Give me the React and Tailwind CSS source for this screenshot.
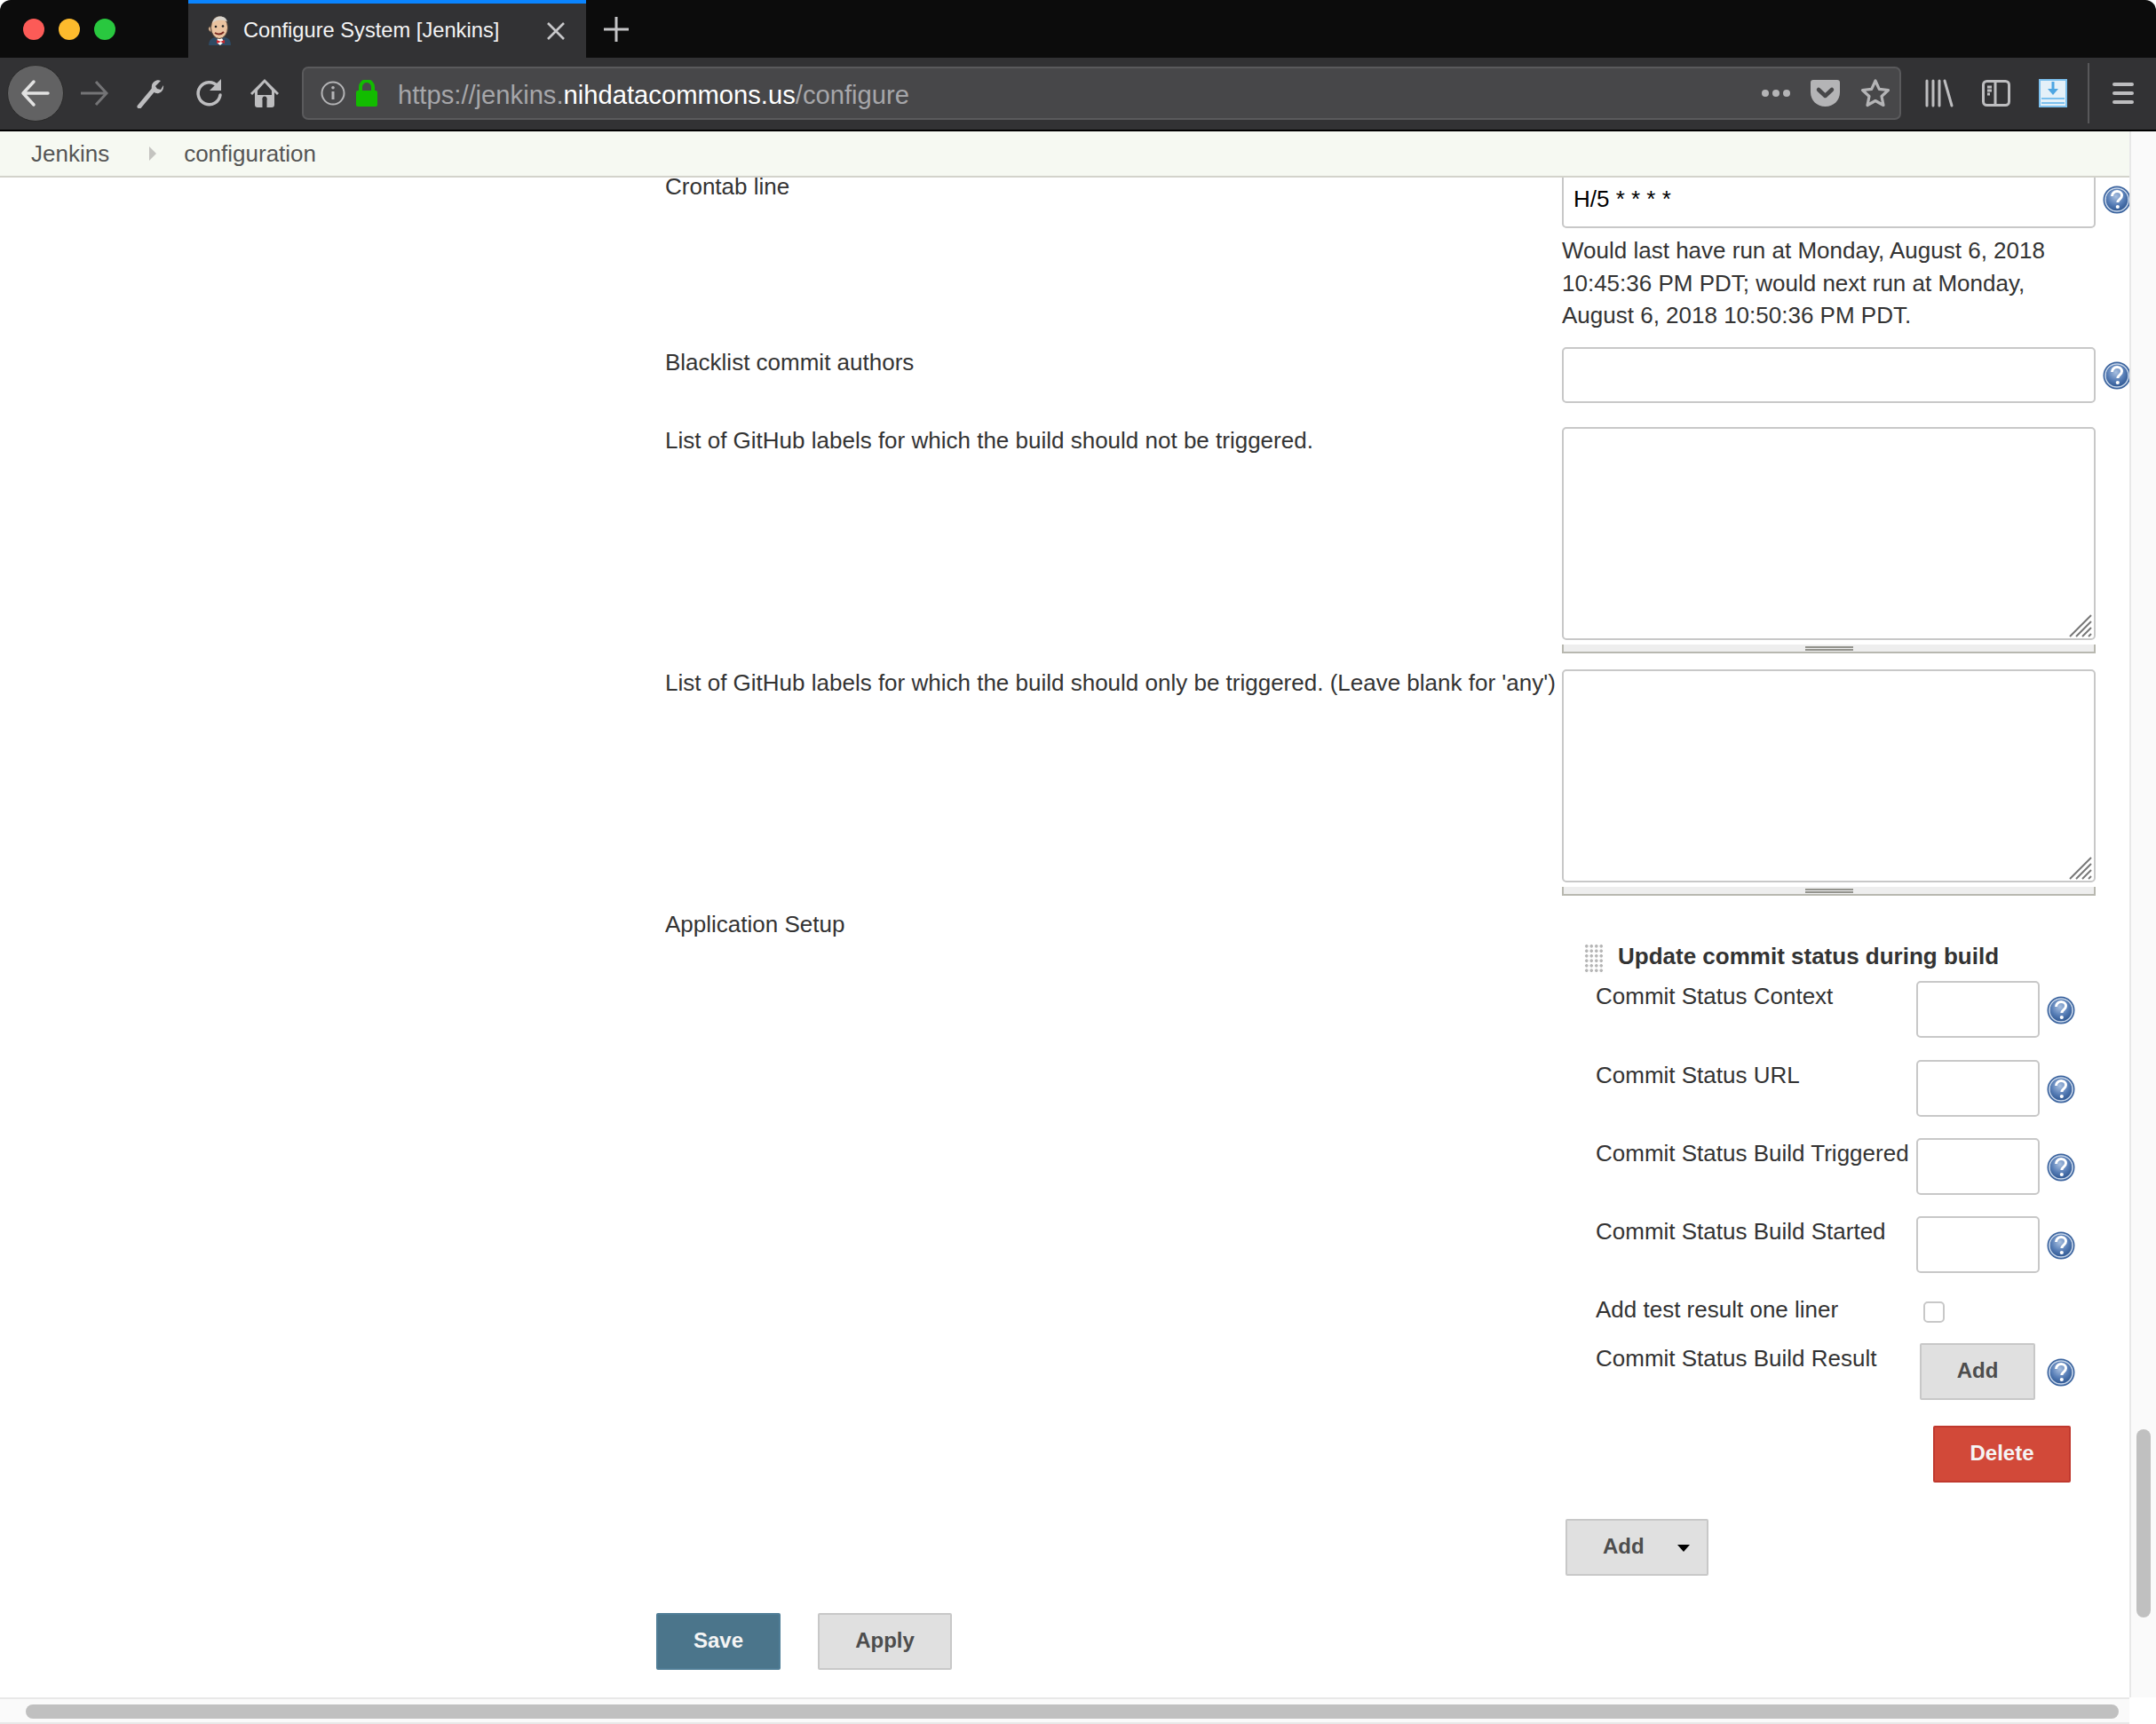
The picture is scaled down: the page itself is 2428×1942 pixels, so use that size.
import React from 'react'

const font = { fontFamily: '"Liberation Sans", Arial, sans-serif' }

function HelpIcon({ className = '' }) {
  return (
    <svg width="32" height="32" viewBox="0 0 32 32" className={`shrink-0 ${className}`}>
      <defs>
        <radialGradient id="helpfill" cx="45%" cy="35%" r="70%">
          <stop offset="0%" stopColor="#a9c0e0" />
          <stop offset="55%" stopColor="#5a80b8" />
          <stop offset="100%" stopColor="#2c5590" />
        </radialGradient>
      </defs>
      <circle cx="16" cy="16" r="15.5" fill="#3d659f" />
      <circle cx="16" cy="16" r="13" fill="none" stroke="#c7d6ea" strokeWidth="1.6" />
      <circle cx="16" cy="16" r="12" fill="url(#helpfill)" />
      <path d="M10.500 12c0-3.400 2.500-5.400 5.700-5.400 3.100 0 5.300 2 5.300 4.700 0 4-4.600 4-4.600 7.700" fill="none" stroke="#fff" strokeWidth="3" />
      <circle cx="16.800" cy="24" r="2.100" fill="#fff" />
    </svg>
  )
}

function Row({ label, top = 'pt-[2px]', children, help = true, helpGap = 'ml-[9px]' }) {
  return (
    <div className="flex">
      <div className={`w-[1010px] shrink-0 text-[26px] leading-[30px] text-[#333] ${top}`}>{label}</div>
      <div className="w-[601px] shrink-0">{children}</div>
      {help && <HelpIcon className={`${helpGap} mt-[16px]`} />}
    </div>
  )
}

function Grip() {
  return (
    <div className="mt-[5px] flex h-[10px] w-[601px] justify-center border-x-2 border-b-2 border-[#b8b8b0] bg-[#eeeeee]">
      <div className="mt-[2px] h-[5px] w-[54px] border-y-2 border-[#94948e]" />
    </div>
  )
}

function TextArea() {
  return (
    <div className="relative h-[240px] w-[601px]">
      <textarea readOnly className="block h-full w-full resize-none rounded-[5px] border-2 border-[#c8c8c8] bg-white outline-none" />
      <svg width="26" height="26" viewBox="0 0 26 26" className="absolute bottom-[3px] right-[4px]">
        <path d="M1 25L25 1M8 25L25 8M15 25L25 15M22 25L25 22" stroke="#777" strokeWidth="2" fill="none" />
      </svg>
    </div>
  )
}

function SmallInput() {
  return <input readOnly className="block h-[64px] w-[139px] rounded-[5px] border-2 border-[#c8c8c8] bg-white outline-none" />
}

function SubRow({ label, children, help = true, className = '' }) {
  return (
    <div className={`flex pl-[38px] ${className}`}>
      <div className="w-[361px] shrink-0 pt-[2px] text-[26px] leading-[30px] text-[#333]">{label}</div>
      {children}
      {help && <HelpIcon className="ml-[8px] mt-[17px]" />}
    </div>
  )
}

function GrayButton({ children, className = '' }) {
  return (
    <button className={`h-[64px] rounded-[2px] border-2 border-[#c8c8c8] bg-[#e0e0e0] text-[24px] font-bold text-[#4d4d4d] ${className}`}>
      {children}
    </button>
  )
}

function Favicon() {
  return (
    <svg width="28" height="33" viewBox="0 0 28 33" className="shrink-0">
      <path d="M2 33c0-6 4-9 8-9h9c5 0 8 3 8 9z" fill="#2f4a63" />
      <path d="M12 25l5 0 2 4-4 4-4-3z" fill="#fff" />
      <path d="M11 27l5 2-5 2zM20 27l-5 2 5 2z" fill="#c8252c" />
      <ellipse cx="14" cy="13" rx="9.500" ry="12.500" fill="#eac3a0" stroke="#5b4a3e" strokeWidth="1" />
      <path d="M6 8C7 3 11 .5 15 .5s7 2 8 6c-4-3-12-3-17 1.500z" fill="#d9d4cc" />
      <circle cx="10" cy="12" r="1.300" fill="#222" />
      <circle cx="18" cy="11.500" r="1.300" fill="#222" />
      <path d="M9 19c3 2 7 2 10-1" fill="none" stroke="#7a2a20" strokeWidth="2" />
      <path d="M4 12c-3 0-3 5 1 6z" fill="#eac3a0" stroke="#5b4a3e" strokeWidth=".8" />
    </svg>
  )
}

function TitleBar() {
  return (
    <div className="flex h-[65px] shrink-0 items-stretch bg-[#0c0c0c]">
      <div className="flex w-[212px] shrink-0 items-center gap-[16px] pl-[26px]">
        <div className="h-[24px] w-[24px] rounded-full bg-[#fc5b57]" />
        <div className="h-[24px] w-[24px] rounded-full bg-[#fdbb2d]" />
        <div className="h-[24px] w-[24px] rounded-full bg-[#29c83f]" />
      </div>
      <div className="flex w-[448px] items-center border-t-[4px] border-[#0a84ff] bg-[#323234] pl-[21px]">
        <Favicon />
        <span className="ml-[13px] w-[341px] pt-[1px] text-[23.700px] text-[#f4f4f4]">Configure System [Jenkins]</span>
        <svg width="22" height="22" viewBox="0 0 22 22">
          <path d="M2 2l18 18M20 2L2 20" stroke="#c8c8ca" strokeWidth="2.600" />
        </svg>
      </div>
      <svg width="28" height="28" viewBox="0 0 28 28" className="ml-[20px] mt-[19px]">
        <path d="M14 0v28M0 14h28" stroke="#c4c4c6" strokeWidth="3" />
      </svg>
    </div>
  )
}

function ToolIcon({ w = 32, children, className = '' }) {
  return (
    <svg width={w} height="34" viewBox={`0 0 ${w} 34`} className={`shrink-0 ${className}`} fill="none" stroke="#bdbdbf" strokeWidth="3">
      {children}
    </svg>
  )
}

function Toolbar() {
  return (
    <div className="flex h-[83px] shrink-0 items-center border-b-2 border-black bg-[#323234] pb-[2px]">
      <div className="ml-[8px] flex h-[64px] w-[64px] items-center justify-center rounded-full border border-[#2a2a2a] bg-[#626263]">
        <svg width="34" height="34" viewBox="0 0 34 34" fill="none" stroke="#e2e2e2" strokeWidth="3.500" strokeLinecap="round" strokeLinejoin="round">
          <path d="M31 17H3M15 4L3 17l12 13" />
        </svg>
      </div>
      <ToolIcon className="ml-[18px]">
        <path d="M1 17h29M18 4l12 13-12 13" stroke="#747476" />
      </ToolIcon>
      <ToolIcon className="ml-[32px]">
        <path d="M3 32L18 14" strokeWidth="5" strokeLinecap="round" />
        <path d="M27 3l-6 6 2 3 4 1 3-5c1 5-3 10-8 9-4-1-6-4-5-9 1-4 6-7 10-5z" fill="#bdbdbf" stroke="none" />
      </ToolIcon>
      <ToolIcon className="ml-[33px]">
        <path d="M26 9A12.500 12.500 0 1 0 29 19" strokeWidth="3.500" strokeLinecap="round" />
        <path d="M30 1v13H17z" fill="#bdbdbf" stroke="none" />
      </ToolIcon>
      <ToolIcon className="ml-[31px]">
        <path fillRule="evenodd" d="M16 1L0 17l2 2 3-3v14a3 3 0 0 0 3 3h16a3 3 0 0 0 3-3V16l3 3 2-2zM8 14l8-9 8 9v5H8z" fill="#bdbdbf" stroke="none" />
        <circle cx="16" cy="23" r="2.500" fill="#323234" stroke="none" />
        <rect x="13.500" y="23" width="5" height="10" fill="#323234" stroke="none" />
      </ToolIcon>
      <div className="ml-[26px] flex h-[60px] w-[1801px] items-center rounded-[7px] border-2 border-[#5a5a5c] bg-[#474749] pl-[19px]">
        <svg width="28" height="28" viewBox="0 0 28 28" fill="none" stroke="#b4b4b6" strokeWidth="2" className="shrink-0">
          <circle cx="14" cy="14" r="12.500" />
          <path d="M14 12v9" strokeWidth="3" />
          <circle cx="14" cy="7.800" r="1.800" fill="#b4b4b6" stroke="none" />
        </svg>
        <svg width="24" height="30" viewBox="0 0 24 30" className="ml-[12px] shrink-0">
          <path d="M5 14V8a7 7 0 0 1 14 0v6" fill="none" stroke="#12bc00" strokeWidth="4" />
          <rect y="12" width="24" height="18" rx="2" fill="#12bc00" />
        </svg>
        <span className="ml-[23px] pt-[6px] text-[29.200px] text-[#a6a6a9]">
          https://jenkins.<span className="text-white">nihdatacommons.us</span>/configure
        </span>
        <div className="ml-auto flex items-center">
          <div className="flex gap-[4px]">
            <div className="h-[8px] w-[8px] rounded-full bg-[#b4b4b6]" />
            <div className="h-[8px] w-[8px] rounded-full bg-[#b4b4b6]" />
            <div className="h-[8px] w-[8px] rounded-full bg-[#b4b4b6]" />
          </div>
          <svg width="33" height="30" viewBox="0 0 33 30" className="ml-[23px]">
            <path d="M3 0h27a3 3 0 0 1 3 3v11c0 9-7 16-16.500 16S0 23 0 14V3a3 3 0 0 1 3-3z" fill="#b4b4b6" />
            <path d="M9 11l7.500 7L24 11" fill="none" stroke="#474749" strokeWidth="4.500" strokeLinecap="round" strokeLinejoin="round" />
          </svg>
          <svg width="34" height="34" viewBox="0 0 34 34" className="ml-[23px] mr-[10px]" fill="none">
            <path d="M17 3l4.300 9.300 10.200 1.200-7.500 7 2 10L17 25.500 8 30.500l2-10-7.500-7 10.200-1.200z" stroke="#b4b4b6" strokeWidth="3.200" strokeLinejoin="round" />
          </svg>
        </div>
      </div>
      <ToolIcon w={32} className="ml-[27px]">
        <path d="M2 3v28M9 3v28M16 3v28M22 3l8 28" strokeLinecap="round" />
      </ToolIcon>
      <svg width="32" height="32" viewBox="0 0 32 32" className="ml-[32px] shrink-0" fill="none" stroke="#bdbdbf" strokeWidth="3">
        <rect x="1.500" y="2.500" width="29" height="27" rx="4" />
        <path d="M15 3v26M6 9h5M6 13h5M6 17h3" />
      </svg>
      <div className="ml-[32px] flex h-[32px] w-[32px] shrink-0 items-start justify-center border-2 border-[#7cc0ee] bg-[#e4f0f8]">
        <svg width="28" height="28" viewBox="0 0 28 28">
          <path d="M14 1v11" stroke="#4ea6e2" strokeWidth="3" />
          <path d="M8 9l6 7 6-7z" fill="#4ea6e2" />
          <path d="M1 20h26M1 25h26" stroke="#7cc0ee" strokeWidth="2.200" />
        </svg>
      </div>
      <div className="ml-[23px] h-[68px] w-[2px] shrink-0 bg-[#58585a]" />
      <div className="ml-[26px] flex w-[24px] shrink-0 flex-col gap-[6px]">
        <div className="h-[4px] rounded-full bg-[#bdbdbf]" />
        <div className="h-[4px] rounded-full bg-[#bdbdbf]" />
        <div className="h-[4px] rounded-full bg-[#bdbdbf]" />
      </div>
    </div>
  )
}

function Breadcrumb() {
  return (
    <div className="flex h-[52px] shrink-0 items-center border-b-2 border-[#d3d3cb] bg-[#f6f9f2] pl-[35px] text-[26px] text-[#555]">
      <span>Jenkins</span>
      <div className="ml-[45px] h-0 w-0 border-y-[8px] border-l-[8px] border-y-transparent border-l-[#c4c4c0]" />
      <span className="ml-[31px]">configuration</span>
    </div>
  )
}

function ConfigForm() {
  return (
    <div className="mt-[-7px] pl-[749px]">
      <Row label="Crontab line" helpGap="ml-[8px]">
        <div className="flex h-[64px] items-center rounded-[5px] border-2 border-[#c8c8c8] bg-white pb-[2px] pl-[11px] text-[26px] text-black">H/5 * * * *</div>
      </Row>
      <div className="ml-[1010px] mt-[7px] h-[110px] w-[590px] text-[26px] leading-[36.500px] text-[#333]">
        Would last have run at Monday, August 6, 2018 10:45:36 PM PDT; would next run at Monday, August 6, 2018 10:50:36 PM PDT.
      </div>
      <div className="mt-[17px]">
        <Row label="Blacklist commit authors" helpGap="ml-[8px]">
          <input readOnly className="block h-[63px] w-[601px] rounded-[5px] border-2 border-[#c8c8c8] bg-white outline-none" />
        </Row>
      </div>
      <div className="mt-[27px]">
        <Row label="List of GitHub labels for which the build should not be triggered." top="pt-0" help={false}>
          <TextArea />
          <Grip />
        </Row>
      </div>
      <div className="mt-[18px]">
        <Row label="List of GitHub labels for which the build should only be triggered. (Leave blank for 'any')" top="pt-0" help={false}>
          <TextArea />
          <Grip />
        </Row>
      </div>
      <div className="mt-[17px]">
        <Row label="Application Setup" top="pt-0" help={false}>
          <div className="mt-[37px] flex h-[42px] items-start pl-[25px]">
            <div className="mr-[16px] h-[34px] w-[22px] bg-[radial-gradient(circle,#b5b5b5_1.5px,transparent_2px)] bg-[length:5.500px_5.500px]" />
            <span className="mt-[-1px] text-[26px] font-bold leading-[30px] text-[#333]">Update commit status during build</span>
          </div>
          <SubRow label="Commit Status Context"><SmallInput /></SubRow>
          <SubRow label="Commit Status URL" className="mt-[25px]"><SmallInput /></SubRow>
          <SubRow label="Commit Status Build Triggered" className="mt-[24px]"><SmallInput /></SubRow>
          <SubRow label="Commit Status Build Started" className="mt-[24px]"><SmallInput /></SubRow>
          <SubRow label="Add test result one liner" help={false} className="mt-[24px]">
            <input type="checkbox" readOnly className="ml-[8px] mt-[8px] h-[24px] w-[24px] appearance-none rounded-[5px] border-2 border-[#c8c8c8] bg-white" />
          </SubRow>
          <SubRow label="Commit Status Build Result" className="mt-[23px]">
            <GrayButton className="ml-[4px] w-[130px] pb-[2px]">Add</GrayButton>
            <div className="w-[5px]" />
          </SubRow>
          <div className="mt-[29px] flex pl-[418px]">
            <button className="h-[64px] w-[155px] rounded-[2px] border-2 border-[#c0392e] bg-[#d24939] pb-[2px] text-[24px] font-bold text-[#f5f5f5]">Delete</button>
          </div>
          <GrayButton className="ml-[4px] mt-[41px] flex w-[161px] items-center pb-[2px] pl-[40px]">
            <span>Add</span>
            <div className="ml-[37px] mt-[3px] h-0 w-0 border-x-[7px] border-t-[8px] border-x-transparent border-t-black" />
          </GrayButton>
        </Row>
      </div>
      <div className="ml-[-10px] mt-[42px] flex gap-[42px]">
        <button className="h-[64px] w-[140px] rounded-[2px] border-2 border-[#4f7d96] bg-[#4b758b] pb-[2px] text-[24px] font-bold text-[#f5f5f5]">Save</button>
        <GrayButton className="w-[151px] pb-[2px]">Apply</GrayButton>
      </div>
    </div>
  )
}

export default function App() {
  return (
    <div className="flex h-[1942px] w-[2428px] flex-col overflow-hidden rounded-t-[12px] bg-white" style={font}>
      <TitleBar />
      <Toolbar />
      <div className="flex min-h-0 flex-1">
        <div className="flex min-w-0 flex-1 flex-col">
          <Breadcrumb />
          <div className="min-h-0 flex-1 overflow-hidden">
            <ConfigForm />
          </div>
        </div>
        <div className="w-[30px] shrink-0 border-l-2 border-[#e8e8e8] bg-[#fafafa] pl-[6px] pt-[1462px]">
          <div className="h-[212px] w-[16px] rounded-full bg-[#c0c0c0]" />
        </div>
      </div>
      <div className="flex h-[30px] shrink-0">
        <div className="w-[2398px] border-y-2 border-[#e8e8e8] bg-[#fafafa] pl-[29px] pt-[6px]">
          <div className="h-[16px] w-[2357px] rounded-full bg-[#c0c0c0]" />
        </div>
      </div>
    </div>
  )
}
